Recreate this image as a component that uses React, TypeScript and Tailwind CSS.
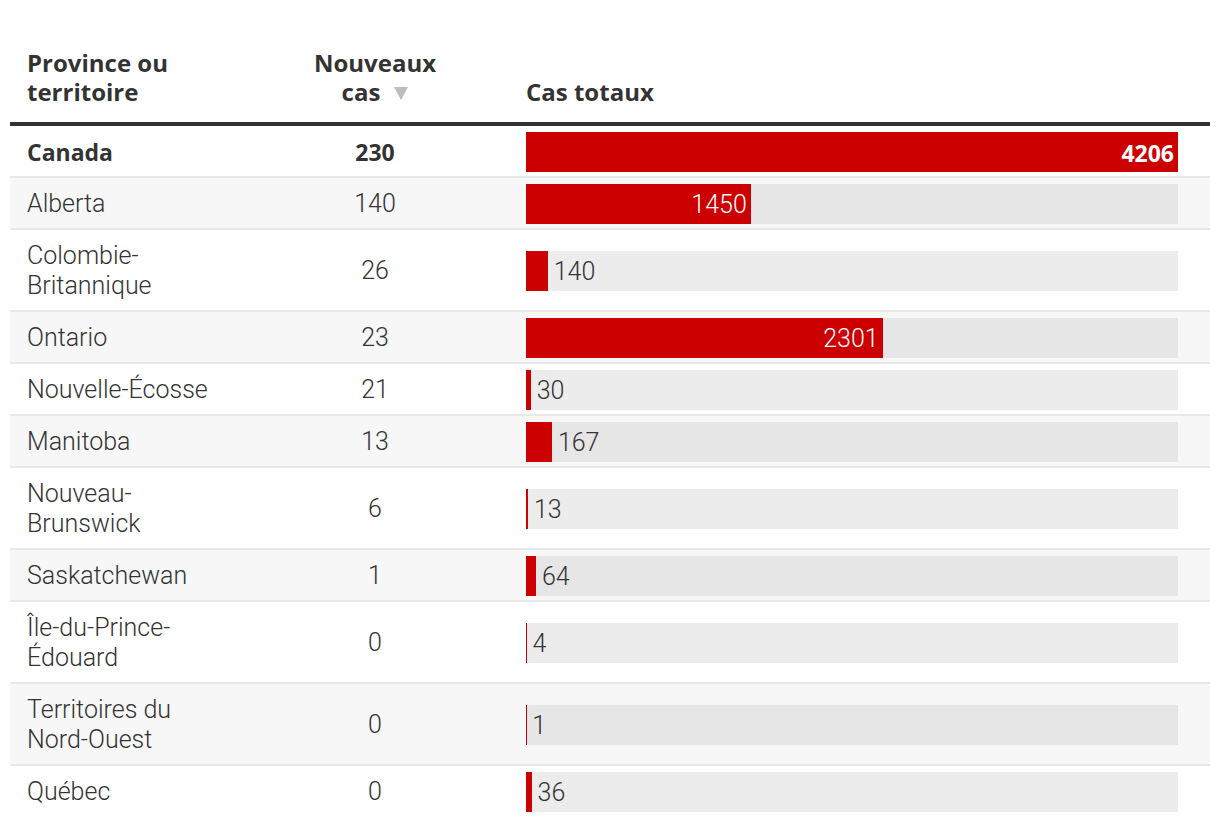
import React from "react";

type Row = { name: string[]; nouveaux: number; total: number; bold?: boolean };

const rows: Row[] = [
  { name: ["Canada"], nouveaux: 230, total: 4206, bold: true },
  { name: ["Alberta"], nouveaux: 140, total: 1450 },
  { name: ["Colombie-", "Britannique"], nouveaux: 26, total: 140 },
  { name: ["Ontario"], nouveaux: 23, total: 2301 },
  { name: ["Nouvelle-Écosse"], nouveaux: 21, total: 30 },
  { name: ["Manitoba"], nouveaux: 13, total: 167 },
  { name: ["Nouveau-", "Brunswick"], nouveaux: 6, total: 13 },
  { name: ["Saskatchewan"], nouveaux: 1, total: 64 },
  { name: ["Île-du-Prince-", "Édouard"], nouveaux: 0, total: 4 },
  { name: ["Territoires du", "Nord-Ouest"], nouveaux: 0, total: 1 },
  { name: ["Québec"], nouveaux: 0, total: 36 },
];

const MAX = 4206;
const TRACK = 652;

const BOLD = "'Open Sans', 'Noto Sans', sans-serif";
const LIGHT = "Roboto, 'Open Sans', sans-serif";

export default function App() {
  return (
    <div className="w-[1220px] h-[826px] overflow-hidden bg-white text-[#333]">
      <div className="ml-[10px] w-[1200px]">
        {/* Header */}
        <div
          className="flex items-end pt-[48px] pb-[16px] border-b-4 border-[#333] text-[24px] leading-[29px] font-bold"
          style={{ fontFamily: BOLD }}
        >
          <div className="w-[300px] pl-[17px]">
            Province ou
            <br />
            territoire
          </div>
          <div className="w-[130px] text-center">
            Nouveaux
            <br />
            <span className="inline-flex items-end">
              <span>cas</span>
              <svg className="ml-[14px] mb-[6px]" width="14" height="13" viewBox="0 0 14 13">
                <polygon points="0,0 14,0 7,13" fill="#bdbdbd" />
              </svg>
            </span>
          </div>
          <div className="flex-1 pl-[86px] pr-[32px]">Cas totaux</div>
        </div>
        {/* Rows */}
        {rows.map((r, i) => {
          const gray = i % 2 === 1;
          const w = (r.total / MAX) * TRACK;
          const inside = w > 80;
          const last = i === rows.length - 1;
          return (
            <div
              key={r.name.join(" ")}
              className={
                "flex items-center min-h-[50px] leading-[30px] " +
                (gray ? "bg-[#f7f7f7] " : "bg-white ") +
                (last ? "" : "border-b-2 border-[#e8e8e8] ") +
                (r.bold ? "font-bold text-[23px]" : "font-light text-[25px]")
              }
              style={{ fontFamily: r.bold ? BOLD : LIGHT }}
            >
              <div className="w-[300px] pl-[17px] pt-[11px] pb-[9px]">
                {r.name.map((n, k) => (
                  <div key={k}>{n}</div>
                ))}
              </div>
              <div className="w-[130px] text-center pt-[2px]">{r.nouveaux}</div>
              <div className="flex-1 pl-[86px] pr-[32px] pt-[1px]">
                <div
                  className={
                    "flex items-center h-[40px] " +
                    (gray ? "bg-[#e6e6e6]" : "bg-[#ececec]")
                  }
                >
                  <div
                    className="h-full bg-[#cc0000] flex items-center justify-end shrink-0"
                    style={{ width: `${w}px` }}
                  >
                    {inside && (
                      <span className="text-white pr-[4px] pt-[2px]">{r.total}</span>
                    )}
                  </div>
                  {!inside && <span className="pl-[6px] pt-[2px]">{r.total}</span>}
                </div>
              </div>
            </div>
          );
        })}
      </div>
    </div>
  );
}
